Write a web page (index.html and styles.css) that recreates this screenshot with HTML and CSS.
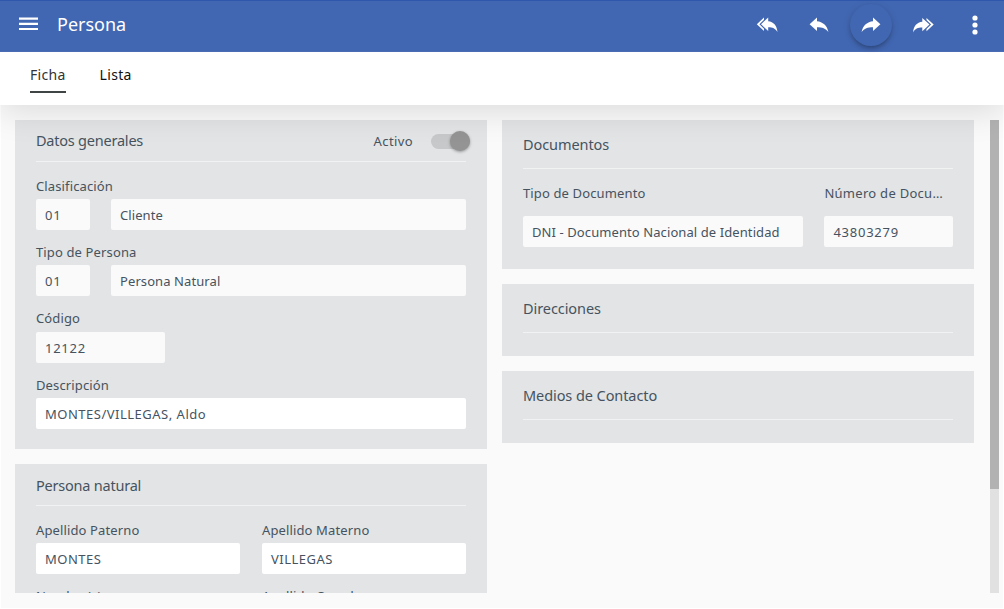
FILE: index.html
```html
<!DOCTYPE html>
<html lang="es">
<head>
<meta charset="utf-8">
<title>Persona</title>
<link rel="stylesheet" href="styles.css">
</head>
<body>
<div class="app">
  <header class="topbar">
    <svg class="menu" width="19" height="14" viewBox="0 0 19 14" fill="#fff"><path d="M0 .5h19v2.2H0zM0 5.7h19v2.2H0zM0 10.9h19v2.2H0z"/></svg>
    <h1 class="title">Persona</h1>
    <nav class="actions">
      <span class="action"><svg width="22" height="16" viewBox="0 0 22 16" fill="#fff"><path d="M8 .5v2.200L3.400 7.200 8 11.700v2.200L.8 7.200zM12.200.5v3.800C17.500 4.800 20.800 8.500 21.500 15c-2.300-3.600-4.700-4.800-9.300-4.800v3.700L5 7.200z"/></svg></span>
      <span class="action"><svg width="20" height="16" viewBox="0 0 20 16" fill="#fff"><path d="M8 .5v3.800C13.500 4.800 18.200 8.500 19.400 15 16.500 11.400 13.500 10.200 8 10.200v3.700L.6 7.200z"/></svg></span>
      <span class="action raised"><svg width="20" height="16" viewBox="0 0 20 16" fill="#fff"><path d="M12 .5v3.800C6.500 4.800 1.800 8.500.6 15c2.900-3.600 5.900-4.800 11.400-4.800v3.700l7.400-6.700z"/></svg></span>
      <span class="action"><svg width="22" height="16" viewBox="0 0 22 16" fill="#fff"><path d="M14.500.9v2.200l4.600 4.500-4.600 4.500v2.200l7.200-6.700zM10.300.9v3.800C5 5.200 1.700 8.900 1 15.400c2.300-3.600 4.700-4.800 9.300-4.800v3.700l7.200-6.700z"/></svg></span>
      <span class="action"><svg width="6" height="20" viewBox="0 0 6 20" fill="#fff"><circle cx="3" cy="3" r="2.600"/><circle cx="3" cy="10" r="2.600"/><circle cx="3" cy="17" r="2.600"/></svg></span>
    </nav>
  </header>
  <nav class="tabs">
    <span class="tab active">Ficha</span>
    <span class="tab">Lista</span>
  </nav>
  <main class="content">
    <div class="column left">
      <section class="card">
        <div class="card-head general"><h2>Datos generales</h2><span class="activo">Activo</span><span class="switch"><span class="knob"></span></span></div>
        <div class="fields">
          <div class="row">
            <div class="field code"><label>Clasificación</label><div class="input number">01</div></div>
            <div class="field grow"><label></label><div class="input">Cliente</div></div>
          </div>
          <div class="row">
            <div class="field code"><label>Tipo de Persona</label><div class="input number">01</div></div>
            <div class="field grow"><label></label><div class="input">Persona Natural</div></div>
          </div>
          <div class="row"><div class="field short"><label>Código</label><div class="input number">12122</div></div></div>
          <div class="row"><div class="field grow"><label>Descripción</label><div class="input edit caps">MONTES/VILLEGAS, Aldo</div></div></div>
        </div>
      </section>
      <section class="card">
        <div class="card-head"><h2>Persona natural</h2></div>
        <div class="fields">
          <div class="row halves">
            <div class="field grow"><label>Apellido Paterno</label><div class="input edit caps">MONTES</div></div>
            <div class="field grow"><label>Apellido Materno</label><div class="input edit caps">VILLEGAS</div></div>
          </div>
          <div class="row halves">
            <div class="field grow"><label>Nombre(s)</label><div class="input edit"></div></div>
            <div class="field grow"><label>Apellido Casada</label><div class="input edit"></div></div>
          </div>
        </div>
      </section>
    </div>
    <div class="column right">
      <section class="card">
        <div class="card-head"><h2>Documentos</h2></div>
        <div class="fields">
          <div class="row">
            <div class="field grow"><label>Tipo de Documento</label><div class="input">DNI - Documento Nacional de Identidad</div></div>
            <div class="field short"><label class="wide">Número de Docu…</label><div class="input number">43803279</div></div>
          </div>
        </div>
      </section>
      <section class="card empty"><div class="card-head"><h2>Direcciones</h2></div></section>
      <section class="card empty"><div class="card-head"><h2>Medios de Contacto</h2></div></section>
    </div>
    <div class="scrollbar"><div class="thumb"></div></div>
  </main>
</div>
</body>
</html>
```
FILE: styles.css
```css
* { box-sizing: border-box; }
body { margin: 0; background: #fff; color: #46535f; font-family: "Noto Sans", "Open Sans", sans-serif; }
.app { width: 1004px; height: 609px; overflow: hidden; display: flex; flex-direction: column; }
.topbar { height: 52px; flex: none; display: flex; align-items: center; padding: 0 8px 3px 19px; background: #4267b2; border-top: 1px solid #2f57ab; border-bottom: 1px solid #4a6cb4; position: relative; z-index: 3; }
.menu { flex: none; margin-bottom: 1px; }
.title { margin: 0 0 2px 19px; font-size: 18px; line-height: 24px; font-weight: 400; color: #fff; }
.actions { margin-left: auto; display: flex; gap: 10px; align-items: center; }
.action { width: 42px; height: 42px; display: flex; align-items: center; justify-content: center; border-radius: 50%; }
.raised { box-shadow: 0 3px 5px -1px rgba(0,0,0,.3), 0 1px 8px rgba(0,0,0,.08); }
.tabs { height: 53px; flex: none; display: flex; gap: 34px; padding: 10px 30px 12px; background: #fff; color: #111; font-size: 14px; line-height: 26px; letter-spacing: .3px; position: relative; z-index: 2; box-shadow: 0 6px 34px rgba(0,0,0,.13); clip-path: inset(0 0 -60px 0); }
.tab { border-bottom: 2px solid transparent; }
.active { border-color: #3f4545; color: #333; }
.content { height: 503px; flex: none; margin: 0 1px; padding: 15px 4px 15px 14px; display: flex; background: #fafafa; }
.column { height: 473px; overflow: hidden; display: flex; flex-direction: column; gap: 15px; }
.left { width: 472px; margin-right: 15px; }
.right { width: 472.400px; margin-right: 15.600px; }
.card { flex: none; padding: 0 21px 20.300px; background: #e2e4e5; }
.card-head { height: 42px; display: flex; align-items: center; border-bottom: 1px solid #f1f2f2; }
.card h2 { margin: 0; font-size: 14.500px; line-height: 20px; font-weight: 400; white-space: nowrap; letter-spacing: -.22px; }
.general h2 { margin-bottom: 2px; }
.activo { margin-left: auto; font-size: 13px; letter-spacing: .4px; }
.switch { width: 39px; height: 15px; margin: 1px -4px 0 18px; border-radius: 8px; background: #c7c8c9; display: flex; align-items: center; justify-content: flex-end; flex: none; }
.knob { width: 20px; height: 20px; border-radius: 50%; background: #949494; box-shadow: 0 1px 3px rgba(0,0,0,.35); flex: none; }
.fields { padding-top: 10.850px; display: flex; flex-direction: column; gap: 9.150px; }
.row { display: flex; gap: 21px; }
.halves { gap: 22px; }
.field { min-width: 0; }
.grow { flex: 1; }
.code { width: 54px; flex: none; }
.short { width: 129px; flex: none; }
label { display: block; height: 26.150px; font-size: 13px; line-height: 26px; white-space: nowrap; letter-spacing: .13px; }
.wide { letter-spacing: .28px; }
.input { height: 31px; padding: 0 9px; border-radius: 2px; background: #fafafa; font-size: 13px; line-height: 32px; white-space: nowrap; letter-spacing: .09px; }
.edit { background: #fff; }
.caps { letter-spacing: .5px; }
.number { letter-spacing: .75px; }
.right h2 { letter-spacing: -.08px; }
.right .card-head { height: 49px; }
.right label { height: 47px; line-height: 48px; }
.right .fields { padding-top: 0; }
.right .card { padding-bottom: 22px; }
.right .empty { padding-bottom: 23px; }
.scrollbar { width: 9px; height: 473px; background: #e1e1e1; }
.thumb { height: 369px; background: #b2b2b2; }
```
